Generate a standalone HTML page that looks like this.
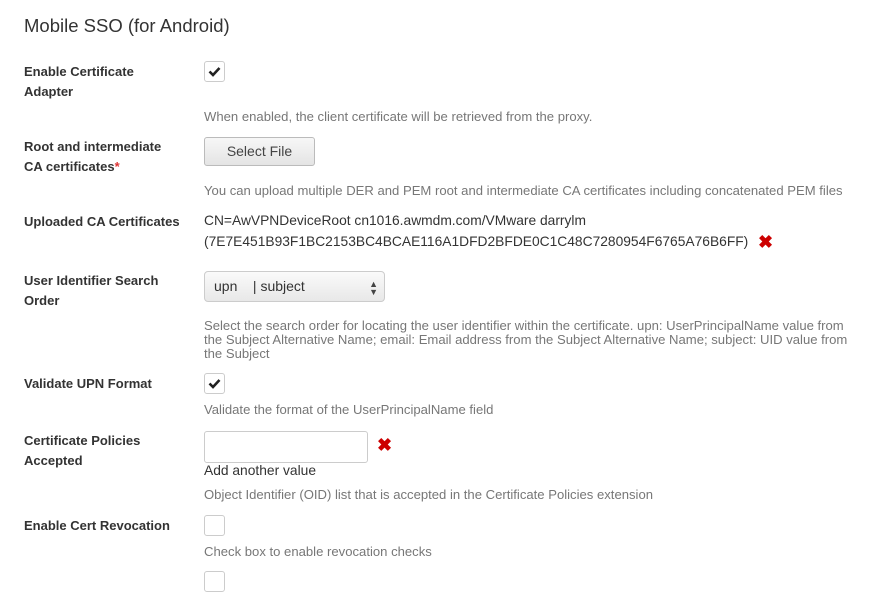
<!DOCTYPE html>
<html><head><meta charset="utf-8"><style>
body{margin:0;width:873px;height:574px;overflow:hidden;background:#fff;font-family:"Liberation Sans",Arial,sans-serif;position:relative}
.a{position:absolute;white-space:nowrap}
.t{left:24px;top:15px;font-size:18.5px;color:#333}
.l{left:24px;font-size:13px;font-weight:bold;color:#333;line-height:20px}
.h{left:204px;font-size:13.1px;color:#777;line-height:14px}
.v{left:204px;font-size:13.8px;color:#333}
.cb{position:absolute;left:204px;width:19px;height:19px;border:1px solid #ccc;border-radius:3px;background:#fff}
.cb svg{position:absolute;left:3px;top:4px}
.x{position:absolute;color:#c00;font-size:18px;font-weight:bold}
</style></head><body>
<div class="a t">Mobile SSO (for Android)</div>

<div class="a l" style="top:62px">Enable Certificate<br>Adapter</div>
<div class="cb" style="top:61px"><svg width="13" height="11" viewBox="0 0 13 11"><path d="M1.5 5.5L5 9L11.5 2" stroke="#222" stroke-width="2.6" fill="none"/></svg></div>
<div class="a h" style="top:110px">When enabled, the client certificate will be retrieved from the proxy.</div>

<div class="a l" style="top:137px">Root and intermediate<br>CA certificates<span style="color:#d33">*</span></div>
<div class="a" style="left:204px;top:137px;width:109px;height:27px;border:1px solid #bbb;border-radius:3px;background:linear-gradient(#f7f7f7,#e4e4e4);font-size:14px;color:#444;text-align:center;line-height:27px">Select File</div>
<div class="a h" style="top:184px">You can upload multiple DER and PEM root and intermediate CA certificates including concatenated PEM files</div>

<div class="a l" style="top:212px">Uploaded CA Certificates</div>
<div class="a v" style="top:213px">CN=AwVPNDeviceRoot cn1016.awmdm.com/VMware darrylm</div>
<div class="a v" style="top:234px">(7E7E451B93F1BC2153BC4BCAE116A1DFD2BFDE0C1C48C7280954F6765A76B6FF)</div>
<div class="x" style="left:758px;top:232px">✖</div>

<div class="a l" style="top:271px">User Identifier Search<br>Order</div>
<div class="a" style="left:204px;top:271px;width:179px;height:29px;border:1px solid #ccc;border-radius:4px;background:linear-gradient(#fafafa,#e8e8e8);font-size:14px;color:#333;line-height:29px"><span style="margin-left:9px">upn&nbsp;&nbsp;&nbsp;&nbsp;| subject</span><span style="position:absolute;right:6px;top:8px;font-size:9px;line-height:8px;color:#444">▲<br>▼</span></div>
<div class="a h" style="top:319px">Select the search order for locating the user identifier within the certificate. upn: UserPrincipalName value from<br>the Subject Alternative Name; email: Email address from the Subject Alternative Name; subject: UID value from<br>the Subject</div>

<div class="a l" style="top:374px">Validate UPN Format</div>
<div class="cb" style="top:373px"><svg width="13" height="11" viewBox="0 0 13 11"><path d="M1.5 5.5L5 9L11.5 2" stroke="#222" stroke-width="2.6" fill="none"/></svg></div>
<div class="a h" style="top:403px">Validate the format of the UserPrincipalName field</div>

<div class="a l" style="top:431px">Certificate Policies<br>Accepted</div>
<div class="a" style="left:204px;top:431px;width:162px;height:30px;border:1px solid #ccc;border-radius:3px"></div>
<div class="x" style="left:377px;top:435px">✖</div>
<div class="a v" style="top:463px">Add another value</div>
<div class="a h" style="top:488px">Object Identifier (OID) list that is accepted in the Certificate Policies extension</div>

<div class="a l" style="top:516px">Enable Cert Revocation</div>
<div class="cb" style="top:515px"></div>
<div class="a h" style="top:545px">Check box to enable revocation checks</div>
<div class="cb" style="top:571px"></div>
</body></html>
